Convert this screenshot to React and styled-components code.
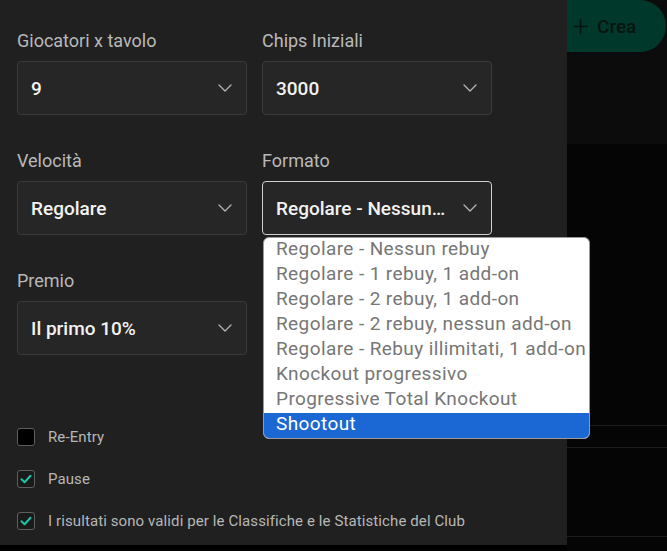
import React from 'react';
import styled, { createGlobalStyle } from 'styled-components';

const GlobalStyle = createGlobalStyle`
    html, body {
        margin: 0;
        padding: 0;
        background: #000;
        font-family: Roboto, "Liberation Sans", sans-serif;
    }
`;

const formatOptions = [
    'Regolare - Nessun rebuy',
    'Regolare - 1 rebuy, 1 add-on',
    'Regolare - 2 rebuy, 1 add-on',
    'Regolare - 2 rebuy, nessun add-on',
    'Regolare - Rebuy illimitati, 1 add-on',
    'Knockout progressivo',
    'Progressive Total Knockout',
    'Shootout',
];

const Chevron = () => (
    <svg width="14" height="8" viewBox="0 0 14 8" fill="none">
        <polyline points="1,1 7,7 13,1" stroke="#b4b4b4" strokeWidth="1.3" strokeLinecap="round" strokeLinejoin="round" />
    </svg>
);

const Check = () => (
    <svg width="12" height="10" viewBox="0 0 12 10" fill="none">
        <polyline points="1.5,5.2 4.6,8.2 10.5,1.8" stroke="#1ec4a6" strokeWidth="2" strokeLinecap="round" strokeLinejoin="round" />
    </svg>
);

const PlusIcon = () => (
    <svg width="17" height="17" viewBox="0 0 17 17" fill="none">
        <path d="M8.5 1.5v14M1.5 8.5h14" stroke="#06140f" strokeWidth="1.6" strokeLinecap="round" />
    </svg>
);

const Field = ({ label, value, active, children }) => (
    <FieldBox>
        <FieldLabel>{label}</FieldLabel>
        <SelectWrap>
            <SelectBox $active={active}>
                <SelectValue>{value}</SelectValue>
                <Chevron />
            </SelectBox>
            {children}
        </SelectWrap>
    </FieldBox>
);

const Option = ({ checked, label }) => (
    <CheckRow>
        <CheckBox $checked={checked}>{checked && <Check />}</CheckBox>
        <CheckLabel>{label}</CheckLabel>
    </CheckRow>
);

const App = () => {
    return (
        <>
            <GlobalStyle />
            <Screen>
                <Panel>
                    <FieldGrid>
                        <Field label="Giocatori x tavolo" value="9" />
                        <Field label="Chips Iniziali" value="3000" />
                        <Field label="Velocità" value="Regolare" />
                        <Field label="Formato" value="Regolare - Nessun rebuy" active>
                            <Dropdown>
                                {formatOptions.map((opt, i) => (
                                    <DropItem key={opt} $selected={i === formatOptions.length - 1}>
                                        {opt}
                                    </DropItem>
                                ))}
                            </Dropdown>
                        </Field>
                        <Field label="Premio" value="Il primo 10%" />
                    </FieldGrid>
                    <CheckList>
                        <Option label="Re-Entry" />
                        <Option checked label="Pause" />
                        <Option checked label="I risultati sono validi per le Classifiche e le Statistiche del Club" />
                    </CheckList>
                </Panel>
                <Side>
                    <TopBand>
                        <CreaButton>
                            <PlusIcon />
                            Crea
                        </CreaButton>
                    </TopBand>
                    <SideSpacer />
                    <SideRow $h={21} />
                    <SideRow $h={88} />
                </Side>
            </Screen>
        </>
    );
};

const Screen = styled.div`
    display: flex;
    width: 667px;
    height: 551px;
    background: #000;
    overflow: hidden;
`;

const Panel = styled.div`
    width: 567px;
    height: 545px;
    flex-shrink: 0;
    background: #202020;
    box-sizing: border-box;
    padding: 30px 17px 0;
    position: relative;
    z-index: 2;
`;

const FieldGrid = styled.div`
    display: grid;
    grid-template-columns: 230px 230px;
    column-gap: 15px;
    row-gap: 35px;
`;

const FieldBox = styled.div`
    display: flex;
    flex-direction: column;
    gap: 9px;
`;

const FieldLabel = styled.div`
    font-size: 18px;
    line-height: 22px;
    color: #b9b9b9;
`;

const SelectWrap = styled.div`
    position: relative;
`;

const SelectBox = styled.div`
    height: 54px;
    box-sizing: border-box;
    display: flex;
    align-items: center;
    gap: 16px;
    padding: 0 14px 0 13px;
    background: #262626;
    border: 1px solid ${(p) => (p.$active ? '#cfcfcf' : '#3a3a3a')};
    border-radius: 4px;
`;

const SelectValue = styled.div`
    flex: 1;
    min-width: 0;
    font-size: 19px;
    font-weight: 500;
    color: #f2f2f2;
    white-space: nowrap;
    overflow: hidden;
    text-overflow: ellipsis;
`;

const Dropdown = styled.div`
    position: absolute;
    top: calc(100% + 2px);
    left: 1px;
    width: 327px;
    background: #fff;
    border: 1px solid #9a9a9a;
    border-radius: 6px;
    box-sizing: border-box;
    overflow: hidden;
    z-index: 10;
`;

const DropItem = styled.div`
    height: 25px;
    line-height: 22px;
    padding-left: 12px;
    font-size: 19px;
    letter-spacing: 0.4px;
    white-space: nowrap;
    color: ${(p) => (p.$selected ? '#fff' : '#767676')};
    background: ${(p) => (p.$selected ? '#1b67d3' : 'transparent')};
`;

const CheckList = styled.div`
    display: flex;
    flex-direction: column;
    gap: 24px;
    margin-top: 73px;
`;

const CheckRow = styled.div`
    display: flex;
    align-items: center;
    gap: 13px;
    height: 18px;
`;

const CheckBox = styled.div`
    width: 18px;
    height: 18px;
    box-sizing: border-box;
    border: 1px solid #5f5f5f;
    border-radius: 3px;
    background: ${(p) => (p.$checked ? '#1a1a1a' : '#000')};
    display: flex;
    align-items: center;
    justify-content: center;
`;

const CheckLabel = styled.div`
    font-size: 15px;
    color: #b7b7b7;
    letter-spacing: 0.1px;
    white-space: nowrap;
`;

const Side = styled.div`
    flex: 1;
    display: flex;
    flex-direction: column;
    background: #050505;
`;

const TopBand = styled.div`
    height: 144px;
    background: #0c0c0c;
`;

const CreaButton = styled.div`
    margin-left: -30px;
    width: 129px;
    height: 52px;
    box-sizing: border-box;
    padding-left: 35px;
    display: flex;
    align-items: center;
    gap: 8px;
    background: #00392b;
    border-radius: 0 26px 26px 0;
    font-size: 19px;
    font-weight: 500;
    color: #06140f;
`;

const SideSpacer = styled.div`
    height: 281px;
    border-bottom: 1px solid #1c1c1c;
`;

const SideRow = styled.div`
    height: ${(p) => p.$h}px;
    border-bottom: 1px solid #1c1c1c;
`;

export default App;
